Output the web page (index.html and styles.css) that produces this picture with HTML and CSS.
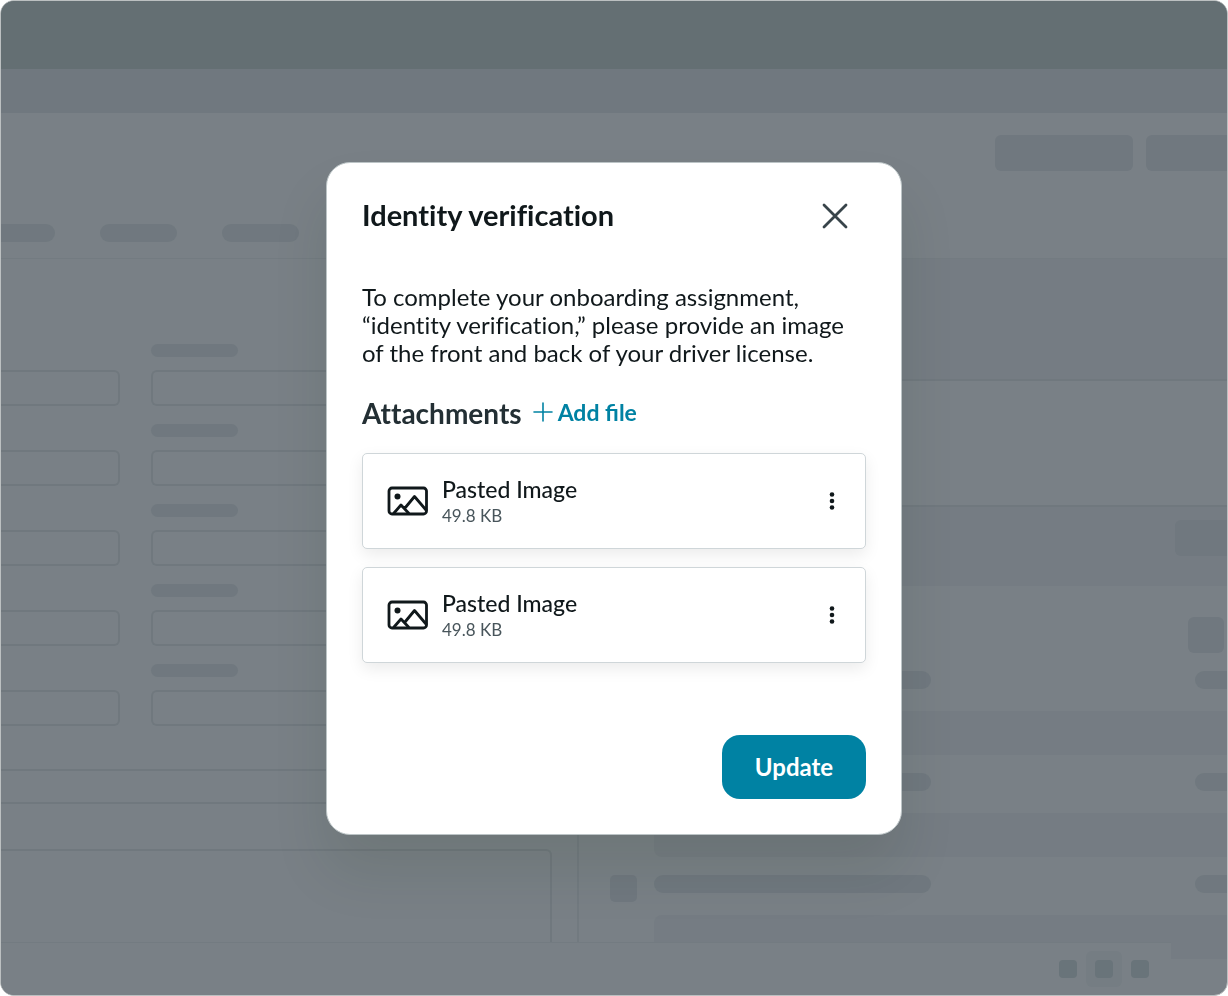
FILE: index.html
```html
<!DOCTYPE html>
<html lang="en">

<head>
    <meta charset="UTF-8">
    <meta name="viewport" content="width=device-width, initial-scale=1.0">
    <title>Identity verification</title>
    <link rel="stylesheet" href="styles.css">
</head>

<body>

    <!-- Dimmed page behind the dialog -->
    <div class="app" aria-hidden="true">
        <div class="topbar"></div>
        <div class="subbar"></div>

        <div class="page-header">
            <div class="actions">
                <span class="action"></span>
                <span class="action action-cut"></span>
            </div>
            <div class="tabs">
                <span class="tab tab-cut"></span>
                <span class="tab"></span>
                <span class="tab"></span>
            </div>
        </div>

        <div class="content">
            <div class="form-panel">
                <div class="fields">
                    <div class="field-row"><span class="box box-cut"></span><span class="label"></span><span class="box"></span></div>
                    <div class="field-row"><span class="box box-cut"></span><span class="label"></span><span class="box"></span></div>
                    <div class="field-row"><span class="box box-cut"></span><span class="label"></span><span class="box"></span></div>
                    <div class="field-row"><span class="box box-cut"></span><span class="label"></span><span class="box"></span></div>
                    <div class="field-row"><span class="box box-cut"></span><span class="label"></span><span class="box"></span></div>
                </div>
                <div class="divider"></div>
                <div class="notes"></div>
            </div>

            <div class="side-panel">
                <div class="side-summary"></div>
                <div class="side-blank"></div>
                <div class="side-toolbar"><span class="action toolbar-action"></span></div>
                <div class="side-list">
                    <div class="list-tools"><span class="tool"></span></div>
                    <div class="list-item"><span class="check"></span><span class="line"></span><span class="line-end"></span></div>
                    <div class="band"></div>
                    <div class="list-item"><span class="check"></span><span class="line"></span><span class="line-end"></span></div>
                    <div class="band"></div>
                    <div class="list-item"><span class="check"></span><span class="line"></span><span class="line-end"></span></div>
                    <div class="band"></div>
                </div>
            </div>
        </div>

        <div class="bottombar">
            <span class="dot"></span>
            <span class="dot-active"><span class="dot"></span></span>
            <span class="dot"></span>
        </div>
    </div>

    <!-- Dialog -->
    <div class="overlay">
        <div class="modal" role="dialog" aria-modal="true" aria-labelledby="modal-title">
            <div class="modal-header">
                <h1 id="modal-title">Identity verification</h1>
                <button type="button" class="close-btn" aria-label="Close">
                    <svg width="26" height="26" viewBox="0 0 26 26" fill="none" stroke="#38444a" stroke-width="2.8" stroke-linecap="round">
                        <path d="M2 2L24 24M24 2L2 24" />
                    </svg>
                </button>
            </div>

            <p class="message">To complete your onboarding assignment, “identity verification,” please provide an image of the front and back of your driver license.</p>

            <div class="attachments-header">
                <h2>Attachments</h2>
                <button type="button" class="add-btn">
                    <svg width="20" height="20" viewBox="0 0 20 20" fill="none" stroke="#0082a3" stroke-width="1.6" stroke-linecap="round">
                        <path d="M10 1V19M1 10H19" />
                    </svg>
                    Add file
                </button>
            </div>

            <ul class="files">
                <li class="file">
                    <svg class="file-icon" width="42" height="30" viewBox="0 0 42 30" fill="none" stroke="#10181b" stroke-width="2.8" stroke-linejoin="round" stroke-linecap="round">
                        <rect x="2" y="2" width="37.500" height="26" rx="3" />
                        <circle cx="10.500" cy="10.500" r="3" fill="#10181b" stroke="none" />
                        <path d="M7 27L14 19L21.500 27M18 22L27.500 10.500L39 24" />
                    </svg>
                    <div class="file-info">
                        <span class="file-name">Pasted Image</span>
                        <span class="file-size">49.8 KB</span>
                    </div>
                    <button type="button" class="menu-btn" aria-label="More options">
                        <svg width="6" height="18" viewBox="0 0 6 18" fill="#10181b">
                            <circle cx="3" cy="2.500" r="2.300" />
                            <circle cx="3" cy="9" r="2.300" />
                            <circle cx="3" cy="15.500" r="2.300" />
                        </svg>
                    </button>
                </li>
                <li class="file">
                    <svg class="file-icon" width="42" height="30" viewBox="0 0 42 30" fill="none" stroke="#10181b" stroke-width="2.8" stroke-linejoin="round" stroke-linecap="round">
                        <rect x="2" y="2" width="37.500" height="26" rx="3" />
                        <circle cx="10.500" cy="10.500" r="3" fill="#10181b" stroke="none" />
                        <path d="M7 27L14 19L21.500 27M18 22L27.500 10.500L39 24" />
                    </svg>
                    <div class="file-info">
                        <span class="file-name">Pasted Image</span>
                        <span class="file-size">49.8 KB</span>
                    </div>
                    <button type="button" class="menu-btn" aria-label="More options">
                        <svg width="6" height="18" viewBox="0 0 6 18" fill="#10181b">
                            <circle cx="3" cy="2.500" r="2.300" />
                            <circle cx="3" cy="9" r="2.300" />
                            <circle cx="3" cy="15.500" r="2.300" />
                        </svg>
                    </button>
                </li>
            </ul>

            <div class="modal-footer">
                <button type="button" class="update-btn">Update</button>
            </div>
        </div>
    </div>

</body>

</html>
```
FILE: styles.css
```css
* {
    box-sizing: border-box;
}

body {
    font-family: Lato, 'Liberation Sans', sans-serif;
    margin: 0;
    background: white;
    color: #10181b;
}

button {
    font-family: inherit;
    border: none;
    padding: 0;
    background: none;
    cursor: pointer;
}

/* Dimmed page */
.app {
    display: flex;
    flex-direction: column;
    min-height: 100vh;
    overflow: hidden;
    border: 1px solid #bcc0c1;
    border-radius: 14px;
    background: #798086;
}

.topbar {
    height: 68px;
    background: #646f73;
}

.subbar {
    height: 44px;
    background: #70787f;
}

.page-header {
    display: flex;
    flex-direction: column;
    justify-content: space-between;
    height: 146px;
    padding: 22px 0 16px;
    border-bottom: 1px solid #737b81;
}

.actions {
    display: flex;
    justify-content: flex-end;
    gap: 13px;
}

.action {
    width: 138px;
    height: 36px;
    border-radius: 6px;
    background: #70787f;
}

.action-cut {
    width: 81px;
    border-radius: 6px 0 0 6px;
}

.tabs {
    display: flex;
    gap: 45px;
}

.tab {
    width: 77px;
    height: 18px;
    border-radius: 9px;
    background: #70787f;
}

.tab-cut {
    width: 54px;
    border-radius: 0 9px 9px 0;
}

.content {
    display: grid;
    grid-template-columns: calc(47% + 2px) 1fr;
    flex-grow: 1;
}

.form-panel {
    display: flex;
    flex-direction: column;
    padding-top: 85px;
    border-right: 2px solid #727a80;
}

.fields {
    display: flex;
    flex-direction: column;
    gap: 18px;
    padding-bottom: 43px;
}

.field-row {
    display: grid;
    grid-template-columns: 119px 1fr;
    grid-template-rows: 13px 36px;
    gap: 13px 31px;
}

.label {
    grid-area: 1 / 2;
    width: 87px;
    border-radius: 7px;
    background: #70787f;
}

.box {
    grid-area: 2 / 2;
    border: 2px solid #70787e;
    border-right: none;
    border-radius: 6px 0 0 6px;
}

.box-cut {
    grid-area: 2 / 1;
    border: 2px solid #70787e;
    border-left: none;
    border-radius: 0 6px 6px 0;
}

.divider {
    height: 35px;
    border-top: 2px solid #70787e;
    border-bottom: 2px solid #70787e;
}

.notes {
    flex-grow: 1;
    margin: 45px 25px 0 0;
    border-top: 2px solid #70787e;
    border-right: 2px solid #70787e;
    border-radius: 0 6px 0 0;
}

.side-summary {
    height: 122px;
    border-bottom: 2px solid #70787e;
    background: #757c83;
}

.side-blank {
    height: 126px;
    border-bottom: 2px solid #70787e;
}

.side-toolbar {
    display: flex;
    justify-content: flex-end;
    height: 79px;
    padding-top: 13px;
    background: #757c83;
}

.toolbar-action {
    width: 52px;
    border-radius: 6px 0 0 6px;
}

.list-tools {
    display: flex;
    justify-content: flex-end;
    height: 67px;
    padding: 31px 3px 0;
}

.tool {
    width: 36px;
    height: 36px;
    border-radius: 6px;
    background: #70787f;
}

.list-item {
    display: flex;
    height: 58px;
    padding: 18px 0 0 31px;
}

.check {
    width: 27px;
    height: 27px;
    margin-right: 17px;
    border-radius: 5px;
    background: #70787f;
}

.line {
    width: 277px;
    height: 18px;
    border-radius: 9px;
    background: #70787f;
}

.line-end {
    width: 32px;
    height: 18px;
    margin-left: auto;
    border-radius: 9px 0 0 9px;
    background: #70787f;
}

.band {
    height: 44px;
    margin-left: 75px;
    border-radius: 8px 0 0 8px;
    background: #757c83;
}

.bottombar {
    display: flex;
    align-items: center;
    justify-content: flex-end;
    gap: 9px;
    height: 53px;
    margin: -17px 56px 0 0;
    padding-right: 22px;
    border-top: 1px solid #737b81;
    background: #798086;
    z-index: 1;
}

.dot {
    width: 18px;
    height: 18px;
    border-radius: 4px;
    background: #69747a;
}

.dot-active {
    padding: 9px;
    border-radius: 6px;
    background: #757d83;
}

.dot-active .dot {
    display: block;
}

/* Dialog */
.overlay {
    position: fixed;
    inset: 0;
    z-index: 2;
    display: flex;
    align-items: center;
    justify-content: center;
}

.modal {
    width: 576px;
    max-width: 100%;
    padding: 35px;
    border: 1px solid #bcc4c6;
    border-radius: 24px;
    background: white;
    box-shadow: 0 36px 56px rgba(20, 40, 10, 0.1);
}

.modal-header {
    display: flex;
    align-items: center;
    justify-content: space-between;
    height: 36px;
    padding-right: 18px;
}

.modal-header h1,
.attachments-header h2 {
    margin: 0;
    padding-bottom: 2px;
    font-size: 28px;
    line-height: 36px;
    font-weight: 700;
    font-variant-ligatures: none;
}

.modal-header h1 {
    font-size: 29px;
}

.close-btn {
    width: 26px;
    height: 26px;
}

.close-btn svg,
.menu-btn svg {
    display: block;
}

.message {
    margin: 49px 0 28px;
    font-size: 24px;
    line-height: 28px;
    font-variant-ligatures: none;
}

.attachments-header {
    display: flex;
    align-items: center;
    gap: 11px;
}

.attachments-header h2 {
    color: #232f34;
}

.add-btn {
    display: flex;
    align-items: center;
    gap: 5px;
    padding-bottom: 4px;
    font-size: 23px;
    line-height: 28px;
    font-weight: 700;
    color: #0082a3;
}

.files {
    display: flex;
    flex-direction: column;
    gap: 18px;
    margin: 20px 0 72px;
    padding: 0;
    list-style: none;
}

.file {
    display: flex;
    align-items: center;
    height: 96px;
    padding: 0 30px 0 24px;
    border: 1px solid #cfd6d9;
    border-radius: 5px;
    background: white;
    box-shadow: 0 6px 16px rgba(0, 0, 0, 0.08);
}

.file-info {
    display: flex;
    flex-direction: column;
    flex-grow: 1;
    padding-left: 13px;
}

.file-name {
    font-size: 23px;
    line-height: 30px;
    font-weight: 500;
}

.file-size {
    font-size: 17px;
    line-height: 24px;
    color: #48555b;
}

.modal-footer {
    display: flex;
    justify-content: flex-end;
}

.update-btn {
    width: 144px;
    height: 64px;
    border-radius: 18px;
    background: #0082a3;
    color: white;
    font-size: 24px;
    font-weight: 700;
}
```
